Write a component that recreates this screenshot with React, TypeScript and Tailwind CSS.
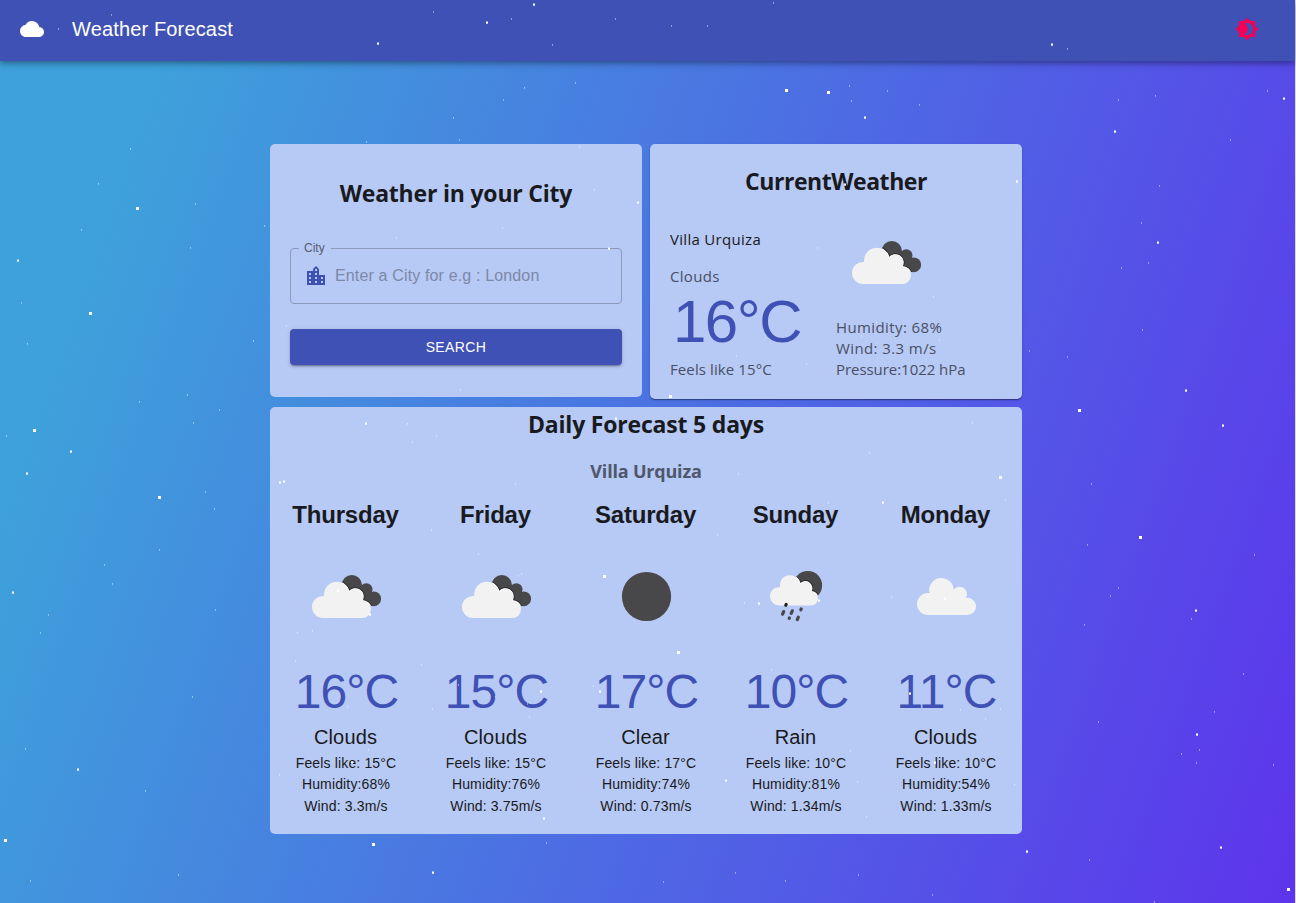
import React from "react";
import { MdBrightness4, MdCloud, MdLocationCity } from "react-icons/md";

type Point = [number, number];

const SMALL_STARS: Point[] = [
  [111, 14], [58, 28], [130, 148], [98, 183], [195, 203], [81, 229], [264, 225], [190, 247], [366, 141], [396, 237],
  [1067, 48], [887, 90], [919, 104], [1118, 99], [1155, 95], [1267, 90], [1230, 139], [1159, 185], [1141, 222],
  [1121, 267], [1148, 262], [933, 296], [459, 139], [579, 146], [594, 189], [502, 227], [286, 325], [460, 389],
  [756, 183], [817, 247], [876, 322], [861, 335], [939, 339], [736, 355], [806, 363], [407, 423], [436, 435],
  [412, 441], [515, 483], [431, 529], [478, 553], [518, 575], [521, 573], [297, 632], [312, 630], [972, 422],
  [869, 452], [738, 473], [828, 502], [1005, 499], [717, 534], [744, 602], [891, 596], [295, 660], [347, 706],
  [421, 664], [432, 708], [458, 684], [495, 696], [527, 703], [529, 716], [593, 685], [368, 749], [279, 774],
  [546, 842], [771, 669], [960, 709], [985, 718], [1000, 708], [850, 750], [857, 781], [1014, 784], [866, 816],
  [735, 872], [785, 880], [663, 881], [858, 874], [932, 894], [21, 302], [27, 343], [253, 340], [187, 394],
  [139, 401], [219, 409], [193, 422], [6, 435], [205, 491], [214, 508], [159, 549], [104, 564], [112, 583],
  [48, 614], [40, 632], [215, 609], [192, 696], [25, 748], [145, 790], [178, 874], [30, 880], [1142, 329],
  [1029, 350], [1067, 356], [1091, 483], [1087, 544], [1254, 554], [1118, 587], [1110, 595], [1191, 618],
  [1084, 624], [1243, 673], [1214, 711], [1098, 721], [1199, 749], [1181, 753], [1196, 762], [1273, 764],
  [1089, 859], [1154, 901], [433, 11], [511, 18], [615, 18], [671, 25], [707, 25], [773, 2], [552, 44],
  [524, 87], [575, 82], [503, 99], [453, 117], [849, 85], [851, 100],
];

const MEDIUM_STARS: Point[] = [
  [377, 42], [17, 259], [1051, 43], [864, 116], [1283, 97], [1114, 130], [1157, 241], [1016, 180], [637, 201],
  [608, 247], [474, 201], [844, 183], [365, 422], [279, 481], [283, 480], [615, 417], [337, 589], [369, 613],
  [882, 501], [758, 602], [944, 597], [818, 599], [540, 690], [599, 690], [351, 761], [543, 817], [432, 871],
  [909, 692], [934, 761], [725, 779], [70, 450], [26, 472], [12, 591], [77, 768], [1185, 389], [1222, 424],
  [1195, 609], [1196, 733], [1220, 846], [1026, 850], [486, 21], [533, 3],
];

const LARGE_STARS: Point[] = [
  [136, 207], [669, 395], [603, 575], [999, 476], [372, 843], [677, 651], [89, 312], [33, 429], [158, 496],
  [4, 839], [1078, 409], [1139, 536], [1287, 888], [785, 89], [827, 91],
];

function Stars() {
  return (
    <svg className="pointer-events-none absolute inset-0 h-[903px] w-[1295px]" viewBox="0 0 1295 903" fill="#fff" aria-hidden="true">
      {SMALL_STARS.map(([x, y]) => (
        <rect key={`s${x}-${y}`} x={x} y={y + 0.3} width={1} height={1.2} opacity={0.7} />
      ))}
      {MEDIUM_STARS.map(([x, y]) => (
        <rect key={`m${x}-${y}`} x={x} y={y + 0.5} width={2} height={2.2} />
      ))}
      {LARGE_STARS.map(([x, y]) => (
        <rect key={`l${x}-${y}`} x={x} y={y} width={3} height={3} />
      ))}
    </svg>
  );
}

const BROKEN_CLOUD =
  "M27 72A11 11 0 0 1 16 61A11 11 0 0 1 28.2 50A12.54 12.54 0 0 1 53 46.3A7.6 7.6 0 0 1 65.8 54.7A8.8 8.8 0 0 1 75 63.3A8.8 8.8 0 0 1 66.3 72Z";
const RAIN_CLOUD =
  "M33 59.5A9 9 0 0 1 24 50.5A9 9 0 0 1 34 41.3A10.06 10.06 0 1 1 53.9 38.6A6.4 6.4 0 0 1 64.7 45.7A6.9 6.9 0 0 1 72 52.6A6.9 6.9 0 0 1 65.1 59.5Z";

function CloudsIcon({ id }: { id: string }) {
  const dark = (
    <>
      <circle cx="55.8" cy="39.2" r="10.2" />
      <circle cx="70.3" cy="43.4" r="6.2" />
      <circle cx="77.7" cy="52.8" r="7.4" />
      <path d="M56 35L66 41L73 45L76 60L60 56L46 46Z" />
    </>
  );
  return (
    <svg className="size-[100px]" viewBox="0 0 100 100" aria-hidden="true">
      <clipPath id={id}>{dark.props.children}</clipPath>
      <g fill="#48484a">{dark}</g>
      <g clipPath={`url(#${id})`}>
        <path d={BROKEN_CLOUD} fill="#222" stroke="#222" strokeWidth="3" />
        <path d={BROKEN_CLOUD} fill="#fff" stroke="#fff" strokeWidth="1.4" />
      </g>
      <path d={BROKEN_CLOUD} fill="#f2f2f2" />
    </svg>
  );
}

function ClearIcon() {
  return (
    <svg className="size-[100px]" viewBox="0 0 100 100" aria-hidden="true">
      <circle cx="50.5" cy="50.5" r="24.6" fill="#48484a" />
    </svg>
  );
}

function RainIcon() {
  return (
    <svg className="size-[100px]" viewBox="0 0 100 100" aria-hidden="true">
      <clipPath id="rain-moon">
        <circle cx="61.8" cy="39.4" r="14.3" />
      </clipPath>
      <circle cx="61.8" cy="39.4" r="14.3" fill="#48484a" />
      <g clipPath="url(#rain-moon)">
        <path d={RAIN_CLOUD} fill="#222" stroke="#222" strokeWidth="2.8" />
        <path d={RAIN_CLOUD} fill="#fff" stroke="#fff" strokeWidth="1.3" />
      </g>
      <path d={RAIN_CLOUD} fill="#f2f2f2" />
      <g stroke="#48484a" strokeWidth="3.2" strokeLinecap="round">
        <path d="M40.2 58.4L39.8 59.2" stroke="#222" />
        <path d="M37.6 65.6L36.6 68.2" />
        <path d="M46.3 64.8L45.2 67.4" />
        <path d="M55.2 63L54.8 63.8" />
        <path d="M43.4 72L43.2 72.4" />
        <path d="M52.3 71.2L51.3 73.6" />
      </g>
    </svg>
  );
}

function ScatteredIcon() {
  return (
    <svg className="size-[100px]" viewBox="0 0 100 100" aria-hidden="true">
      <path
        d="M32 69A11 11 0 0 1 21 58A11 11 0 0 1 33.5 47A12.27 12.27 0 1 1 57.7 43.5A7.5 7.5 0 0 1 70 52A8.5 8.5 0 0 1 80 60.5A8.5 8.5 0 0 1 71.5 69Z"
        fill="#f2f2f2"
      />
    </svg>
  );
}

const DAYS = [
  { day: "Thursday", icon: <CloudsIcon id="thu" />, temp: 16, sky: "Clouds", feels: 15, humidity: 68, wind: "3.3" },
  { day: "Friday", icon: <CloudsIcon id="fri" />, temp: 15, sky: "Clouds", feels: 15, humidity: 76, wind: "3.75" },
  { day: "Saturday", icon: <ClearIcon />, temp: 17, sky: "Clear", feels: 17, humidity: 74, wind: "0.73" },
  { day: "Sunday", icon: <RainIcon />, temp: 10, sky: "Rain", feels: 10, humidity: 81, wind: "1.34" },
  { day: "Monday", icon: <ScatteredIcon />, temp: 11, sky: "Clouds", feels: 10, humidity: 54, wind: "1.33" },
];

function SearchCard() {
  return (
    <section className="h-[253px] w-[372px] rounded-[5px] bg-[#b7c9f5] px-5 pt-[33px]">
      <h2 className="text-center font-['Open_Sans',sans-serif] text-[23px] leading-8 font-bold tracking-[-0.2px] text-[#191a20]">
        Weather in your City
      </h2>
      <fieldset className="mt-[33px] h-[62px] rounded-[4px] border border-[#8c9abb] pl-2">
        <legend className="pr-[6px] pl-[5px] text-[12px] leading-3 text-[#555d71]">City</legend>
        <div className="flex h-[43px] items-center pl-[5px]">
          <MdLocationCity className="size-6 text-[#3f51b5]" />
          <input
            className="ml-[7px] w-[270px] text-base tracking-[0.15px] outline-none placeholder:text-[#7c88a8]"
            placeholder="Enter a City for e.g : London"
          />
        </div>
      </fieldset>
      <button className="mt-[25px] h-9 w-full rounded-[4px] bg-[#3f51b5] text-[14px] tracking-[0.4px] text-white shadow-[0_3px_1px_-2px_rgba(0,0,0,0.2),0_2px_2px_0_rgba(0,0,0,0.14),0_1px_5px_0_rgba(0,0,0,0.12)]">
        SEARCH
      </button>
    </section>
  );
}

function CurrentCard() {
  return (
    <section className="h-[255px] w-[372px] rounded-[5px] bg-[#b7c9f5] px-5 pt-[21px] font-['Open_Sans',sans-serif] text-[15px] text-[#495064] shadow-[0_2px_1px_-1px_rgba(0,0,0,0.2),0_1px_1px_0_rgba(0,0,0,0.2),0_1px_3px_0_rgba(0,0,0,0.12)]">
      <h2 className="text-center text-[23px] leading-8 font-bold tracking-[-0.45px] text-[#191a20]">CurrentWeather</h2>
      <div className="mt-[15px] flex">
        <div className="w-[166px] pt-[15px]">
          <p className="leading-6 font-medium tracking-[0.3px] text-[#191a20]">Villa Urquiza</p>
          <p className="mt-[13px] leading-6 font-medium tracking-[0.3px]">Clouds</p>
          <p className="ml-[3px] h-[69px] font-['Liberation_Sans',sans-serif] text-[60px] leading-[68px] tracking-[-1.5px] text-[#3f51b5]">16°C</p>
          <p className="leading-6 font-medium tracking-[0.1px]">Feels like 15°C</p>
        </div>
        <div>
          <CloudsIcon id="now" />
          <div className="mt-[5px] leading-[21px] font-medium">
            <p className="tracking-[0.4px]">Humidity: 68%</p>
            <p className="tracking-[0.4px]">Wind: 3.3 m/s</p>
            <p className="tracking-[-0.05px]">Pressure:1022 hPa</p>
          </div>
        </div>
      </div>
    </section>
  );
}

function ForecastCard() {
  return (
    <section className="h-[427px] w-[752px] rounded-[5px] bg-[#b7c9f5] px-px pt-px">
      <h2 className="text-center font-['Open_Sans',sans-serif] text-[23px] leading-8 font-bold tracking-[-0.2px] text-[#191a20]">
        Daily Forecast 5 days
      </h2>
      <h3 className="mt-[17px] text-center font-['Open_Sans',sans-serif] text-[18px] leading-7 font-bold tracking-[-0.2px] text-[#4f576c]">
        Villa Urquiza
      </h3>
      <div className="mt-[14px] grid grid-cols-5">
        {DAYS.map((d) => (
          <article key={d.day} className="flex flex-col items-center text-[14px] leading-[21px] tracking-[0.15px] text-[#191a20]">
            <h4 className="pr-px text-[24px] leading-8 font-bold tracking-[-0.2px]">{d.day}</h4>
            <div className="mt-[15px]">{d.icon}</div>
            <p className="mt-[18px] ml-px text-[48px] leading-[56px] tracking-[-0.9px] text-[#3f51b5]">{d.temp}°C</p>
            <p className="mt-px pr-px text-[20px] leading-8">{d.sky}</p>
            <p>Feels like: {d.feels}°C</p>
            <p>Humidity:{d.humidity}%</p>
            <p className="mt-px">Wind: {d.wind}m/s</p>
          </article>
        ))}
      </div>
    </section>
  );
}

export default function App() {
  return (
    <div className="h-[903px] w-full overflow-hidden bg-[#dedcf6] font-['Liberation_Sans',sans-serif]">
      <div className="relative h-full w-[1295px] bg-[linear-gradient(109.6deg,#3ea1db_11.2%,#5d34ec_100.2%)]">
        <header className="flex h-[61px] items-center bg-[#3f51b5] pr-9 pb-[3px] pl-5 text-white shadow-[0_2px_4px_-1px_rgba(0,0,0,0.2),0_4px_5px_0_rgba(0,0,0,0.14),0_1px_10px_0_rgba(0,0,0,0.12)]">
          <MdCloud className="size-6" />
          <h1 className="ml-7 flex-1 text-[20px] leading-8 tracking-[0.15px]">Weather Forecast</h1>
          <MdBrightness4 className="size-6 text-[#f50057]" />
        </header>
        <main className="mx-auto mt-[83px] flex w-[755px] flex-wrap gap-x-2 pr-[3px]">
          <SearchCard />
          <CurrentCard />
          <div className="mt-2">
            <ForecastCard />
          </div>
        </main>
        <Stars />
      </div>
    </div>
  );
}
